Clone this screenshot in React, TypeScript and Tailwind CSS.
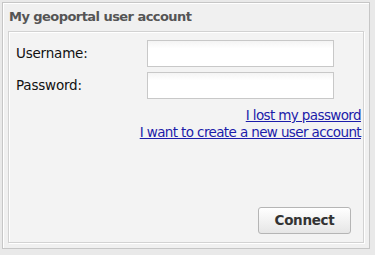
import React from "react";

export default function App() {
  const font = { fontFamily: '"DejaVu Sans", Verdana, sans-serif' };
  return (
    <div className="w-[375px] h-[255px] bg-[#e9e9e9] pt-[2px] pl-[2px]" style={font}>
      <div className="w-[368px] h-[247px] border border-[#c6c6c6] bg-[#f0f0f0] flex flex-col shadow-[inset_1px_1px_0_#ffffff]">
        <div className="h-[28px] flex items-center pl-[6px] text-[13px] font-bold text-[#555555] tracking-[-0.55px]">
          My geoportal user account
        </div>
        <div className="mx-[5px] flex-1 mb-[5px] border border-[#d2d2d2] bg-[#f3f3f3] shadow-[inset_1px_1px_0_#ffffff,1px_1px_0_#ffffff] flex flex-col pl-[7px] pr-[12px] pt-[8px] pb-[8px]">
          <div className="flex items-center h-[27px]">
            <span className="w-[131px] text-[13.5px] text-[#111111] tracking-[-0.2px]">Username:</span>
            <input className="w-[187px] h-[27px] border border-[#c8c8c8] bg-gradient-to-b from-[#f4f4f4] to-white to-[30%] outline-none" />
          </div>
          <div className="flex items-center h-[27px] mt-[5px]">
            <span className="w-[131px] text-[13.5px] text-[#111111] tracking-[-0.2px]">Password:</span>
            <input type="password" className="w-[187px] h-[27px] border border-[#c8c8c8] bg-gradient-to-b from-[#f4f4f4] to-white to-[30%] outline-none" />
          </div>
          <div className="flex flex-col items-end mr-[-10px] mt-[8px] text-[13.5px] leading-[17px] tracking-[-0.62px]">
            <a href="#" className="text-[#1c1caa] underline">I lost my password</a>
            <a href="#" className="text-[#1c1caa] underline">I want to create a new user account</a>
          </div>
          <div className="flex-1" />
          <div className="flex justify-end">
            <button className="w-[93px] h-[27px] rounded-[3px] border border-[#b5b5b5] bg-gradient-to-b from-white to-[#e6e6e6] text-[13.5px] font-bold text-[#333333] tracking-[-0.3px]">
              Connect
            </button>
          </div>
        </div>
      </div>
    </div>
  );
}
